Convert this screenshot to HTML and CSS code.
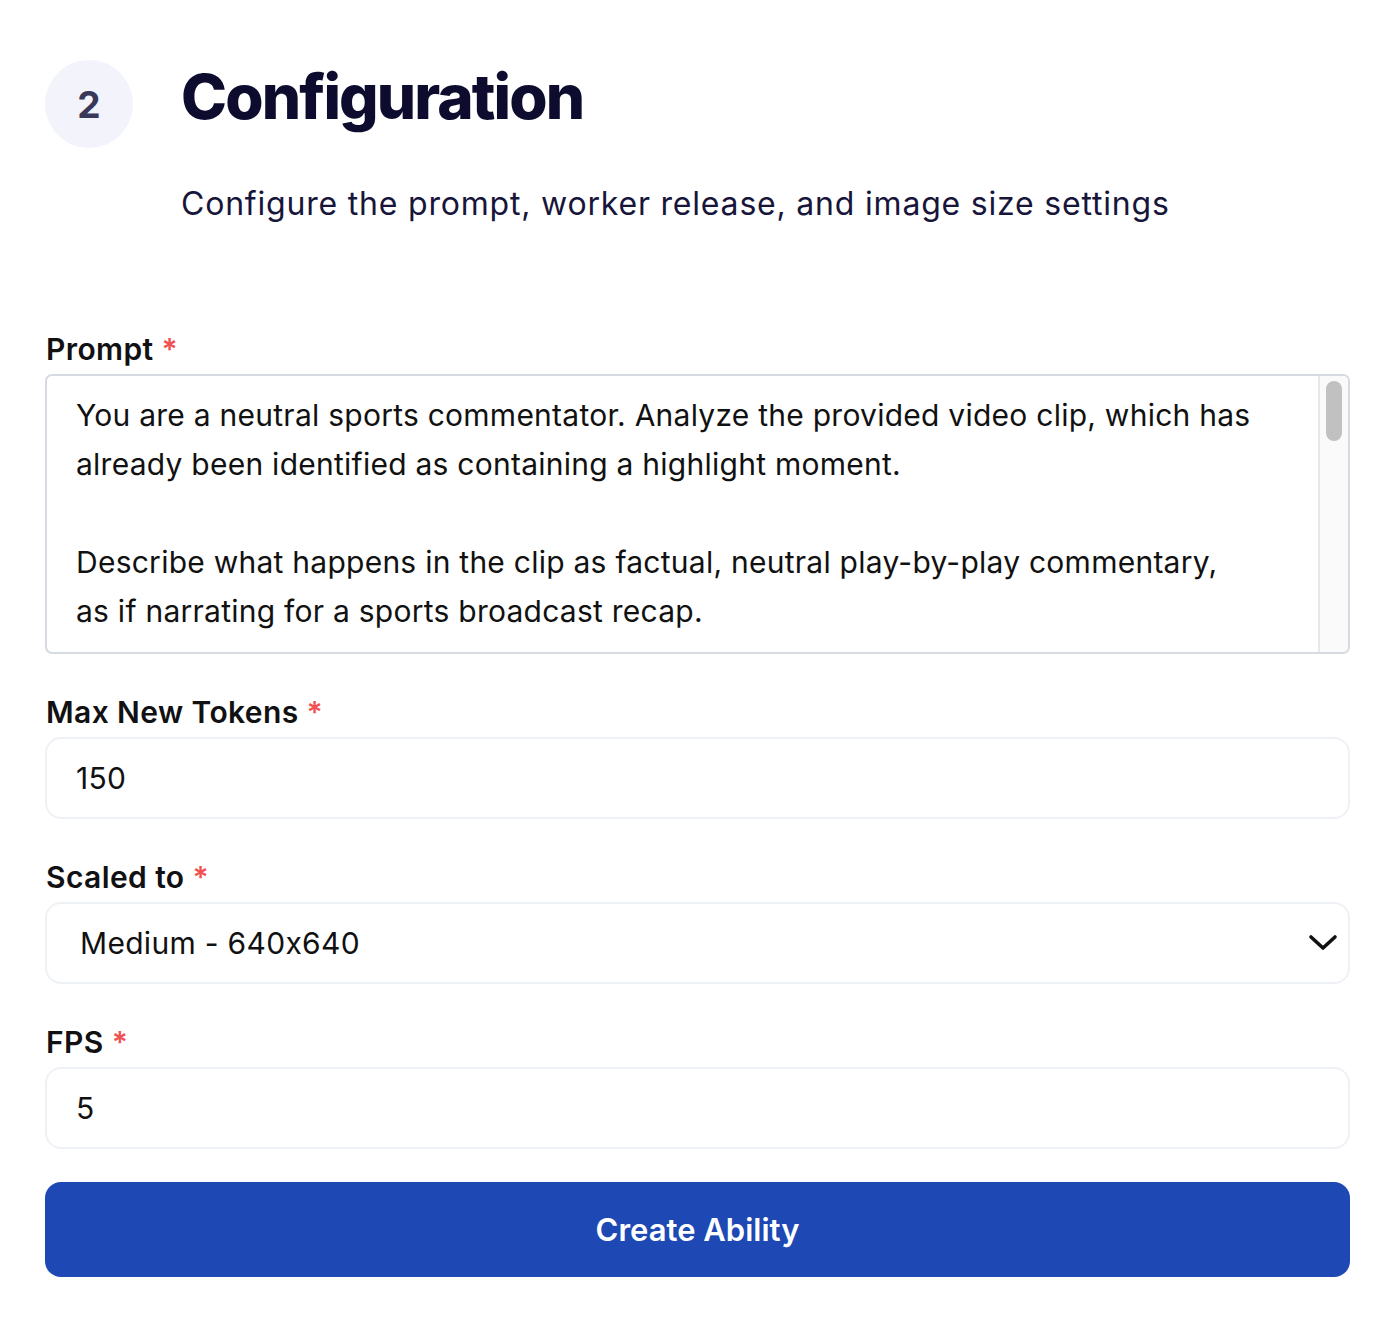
FILE: index.html
```html
<!DOCTYPE html>
<html lang="en">
<head>
<meta charset="utf-8">
<title>Configuration</title>
<link rel="stylesheet" href="styles.css">
</head>
<body>
<main class="page">
  <header class="step-header">
    <div class="step-badge">2</div>
    <div class="step-text">
      <h1 class="step-title">Configuration</h1>
      <p class="step-subtitle">Configure the prompt, worker release, and image size settings</p>
    </div>
  </header>

  <form class="form">
    <div class="field">
      <label class="field-label">Prompt <span class="req">*</span></label>
      <div class="textarea-box">
        <textarea class="textarea">You are a neutral sports commentator. Analyze the provided video clip, which has already been identified as containing a highlight moment.

Describe what happens in the clip as factual, neutral play-by-play commentary, as if narrating for a sports broadcast recap.

Guidelines:
- Focus only on what is visible in the clip.
- Mention the players, the ball, and the key action.
- Do not speculate about events outside the clip.
- Do not express opinions or favour either team.
- Keep the language clear, concise and objective.</textarea>
        <div class="scrollbar" aria-hidden="true"><div class="scroll-thumb"></div></div>
      </div>
    </div>

    <div class="field">
      <label class="field-label">Max New Tokens <span class="req">*</span></label>
      <input class="input" type="text" value="150">
    </div>

    <div class="field">
      <label class="field-label">Scaled to <span class="req">*</span></label>
      <div class="select">
        <span class="select-value">Medium - 640x640</span>
        <svg class="chevron" width="30" height="18" viewBox="0 0 30 18" aria-hidden="true">
          <path d="M3 3 L15 14 L27 3" fill="none" stroke="#111" stroke-width="3.6" stroke-linecap="round" stroke-linejoin="round"/>
        </svg>
      </div>
    </div>

    <div class="field">
      <label class="field-label">FPS <span class="req">*</span></label>
      <input class="input" type="text" value="5">
    </div>

    <button class="submit" type="button">Create Ability</button>
  </form>
</main>
</body>
</html>
```
FILE: styles.css
```css
* { box-sizing: border-box; }

html, body {
  margin: 0;
  padding: 0;
  background: #ffffff;
}

body {
  font-family: Inter, "Noto Sans", sans-serif;
  font-feature-settings: "calt" 0;
  color: #111111;
}

.page {
  width: 1396px;
  padding: 60px 46px 40px 45px;
}

.step-header {
  display: flex;
  align-items: flex-start;
  gap: 48px;
}

.step-badge {
  flex: none;
  width: 88px;
  height: 88px;
  border-radius: 50%;
  background: #f3f3fc;
  color: #3a3858;
  font-weight: 700;
  font-size: 37px;
  display: flex;
  align-items: center;
  justify-content: center;
}

.step-text {
  padding-top: 3px;
}

.step-title {
  margin: 0;
  font-family: Inter, sans-serif;
  font-weight: 800;
  font-size: 62px;
  line-height: 68px;
  letter-spacing: -1.9px;
  color: #0d0c2e;
}

.step-subtitle {
  margin: 53px 0 0 0;
  font-family: Inter, sans-serif;
  font-weight: 400;
  font-size: 32px;
  line-height: 40px;
  letter-spacing: 0.8px;
  color: #17163a;
}

.form {
  margin-top: 108px;
  display: flex;
  flex-direction: column;
}

.field {
  display: flex;
  flex-direction: column;
  gap: 8px;
  margin-bottom: 41px;
}

.field:last-of-type {
  margin-bottom: 33px;
}

.field-label {
  font-size: 30px;
  line-height: 34px;
  font-weight: 600;
  letter-spacing: 0.4px;
  color: #111114;
  padding-left: 1px;
}

.req {
  color: #f05252;
  margin-left: 0;
}

.textarea-box {
  display: flex;
  height: 280px;
  border: 2px solid #d6dae1;
  border-radius: 7px;
  overflow: hidden;
  background: #ffffff;
}

.textarea {
  flex: 1;
  display: block;
  resize: none;
  border: none;
  padding: 15px 64px 14px 29px;
  font-family: Inter, sans-serif;
  font-feature-settings: "calt" 0;
  font-size: 30px;
  line-height: 49px;
  letter-spacing: 0.25px;
  color: #111111;
  background: transparent;
  overflow: hidden;
  outline: none;
}

.scrollbar {
  flex: none;
  width: 30px;
  background: #fafafa;
  border-left: 2px solid #e8e8e8;
  padding: 5px 6px 0 6px;
}

.scroll-thumb {
  height: 60px;
  border-radius: 8px;
  background: #c1c1c1;
}

.input,
.select {
  display: flex;
  align-items: center;
  width: 100%;
  height: 82px;
  border: 2px solid #eef1f6;
  border-radius: 16px;
  background: #ffffff;
  font-family: Inter, sans-serif;
  font-feature-settings: "calt" 0;
  font-size: 30px;
  letter-spacing: 0.3px;
  color: #111111;
  outline: none;
}

.input {
  padding: 0 29px;
}

.select {
  justify-content: space-between;
  padding: 0 10px 0 33px;
}

.chevron {
  display: block;
}

.submit {
  display: block;
  width: 100%;
  height: 95px;
  border: none;
  border-radius: 16px;
  background: #1e48b4;
  color: #ffffff;
  font-family: Inter, sans-serif;
  font-size: 31px;
  font-weight: 600;
  cursor: pointer;
}
```
